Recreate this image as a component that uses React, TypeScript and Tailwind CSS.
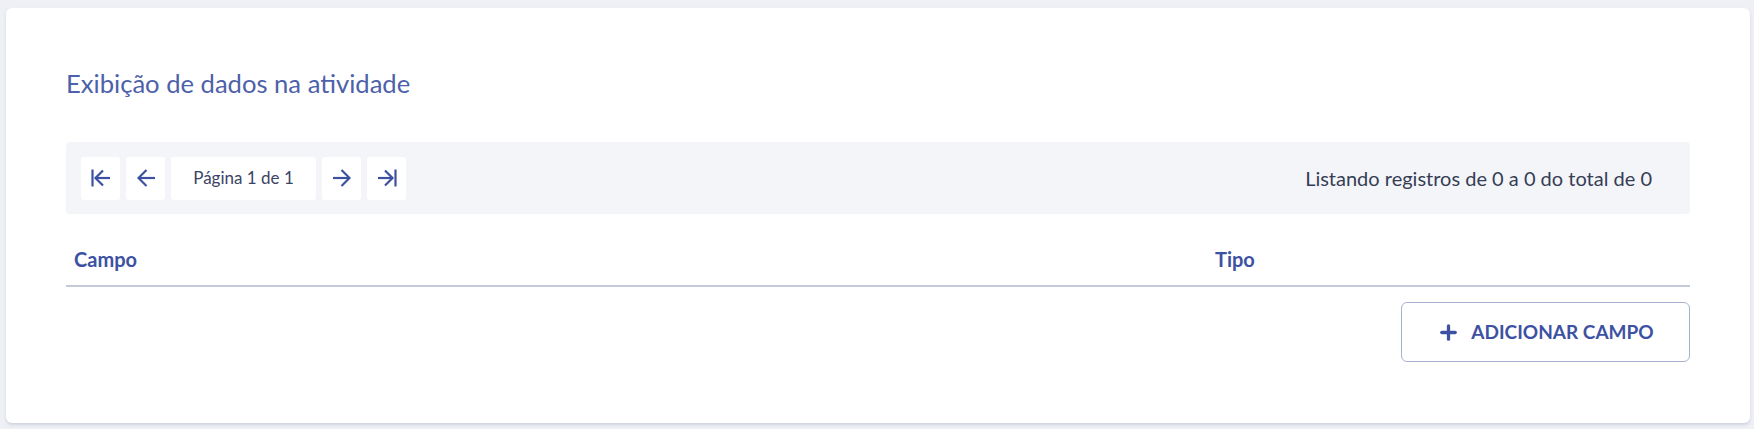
import { Plus } from "lucide-react";

const blue = "text-[#3d51a3]";

function FirstIcon() {
  return (
    <svg width="20" height="18" viewBox="0 0 20 18" fill="none" stroke="currentColor" strokeWidth="2.2">
      <path d="M1.5 0.5v17" />
      <path d="M12 1.5 4.5 9l7.5 7.5" />
      <path d="M4.5 9H19" />
    </svg>
  );
}

function LastIcon() {
  return (
    <svg width="20" height="18" viewBox="0 0 20 18" fill="none" stroke="currentColor" strokeWidth="2.2">
      <path d="M18.5 0.5v17" />
      <path d="M8 1.5 15.5 9 8 16.5" />
      <path d="M1 9h14.5" />
    </svg>
  );
}

function PrevIcon() {
  return (
    <svg width="18" height="18" viewBox="0 0 18 18" fill="none" stroke="currentColor" strokeWidth="2.2">
      <path d="M9.5 1 1.5 9l8 8" />
      <path d="M1.5 9H18" />
    </svg>
  );
}

function NextIcon() {
  return (
    <svg width="18" height="18" viewBox="0 0 18 18" fill="none" stroke="currentColor" strokeWidth="2.2">
      <path d="M8.5 1 16.5 9l-8 8" />
      <path d="M0 9h16.5" />
    </svg>
  );
}

function PagerButton({ children }: { children: React.ReactNode }) {
  return (
    <button className={`flex h-[43px] w-[39px] items-center justify-center rounded-[3px] bg-white ${blue}`}>
      {children}
    </button>
  );
}

export default function App() {
  return (
    <div
      className="min-h-[429px] w-full bg-[#eef0f5] pl-[6px] pr-[4px] pt-[8px] pb-[6px]"
      style={{ fontFamily: "Lato, 'Open Sans', sans-serif" }}
    >
      <div className="rounded-[6px] bg-white px-[60px] pt-[55px] pb-[61px] shadow-[0_2px_3px_rgba(180,186,205,0.5)]">
        <h2 className="text-[25.6px] font-normal leading-[40px] text-[#4d61aa]">
          Exibição de dados na atividade
        </h2>

        <div className="mt-[39px] flex h-[72px] items-center rounded-[4px] bg-[#f4f5f9] px-[15px]">
          <div className="flex items-center gap-[6px]">
            <PagerButton>
              <FirstIcon />
            </PagerButton>
            <PagerButton>
              <PrevIcon />
            </PagerButton>
            <div className="flex h-[43px] w-[145px] items-center justify-center rounded-[3px] bg-white text-[17px] text-[#3b4466]">
              Página 1 de 1
            </div>
            <PagerButton>
              <NextIcon />
            </PagerButton>
            <PagerButton>
              <LastIcon />
            </PagerButton>
          </div>
          <div className="ml-auto pr-[23px] text-[20px] text-[#363d55]">
            Listando registros de 0 a 0 do total de 0
          </div>
        </div>

        <div className="flex h-[73px] items-center border-b-2 border-[#c5c9da] pt-[18px] text-[20px] font-bold text-[#3d51a3]">
          <div className="w-[1141px] pl-[8px]">Campo</div>
          <div className="pl-[8px]">Tipo</div>
        </div>

        <div className="mt-[15px] flex justify-end">
          <button
            className={`flex h-[60px] w-[289px] items-center justify-center gap-[11px] rounded-[6px] border border-[#a8b0d0] bg-white text-[19px] font-bold ${blue}`}
          >
            <Plus size={23} strokeWidth={3.4} />
            <span>ADICIONAR CAMPO</span>
          </button>
        </div>
      </div>
    </div>
  );
}
